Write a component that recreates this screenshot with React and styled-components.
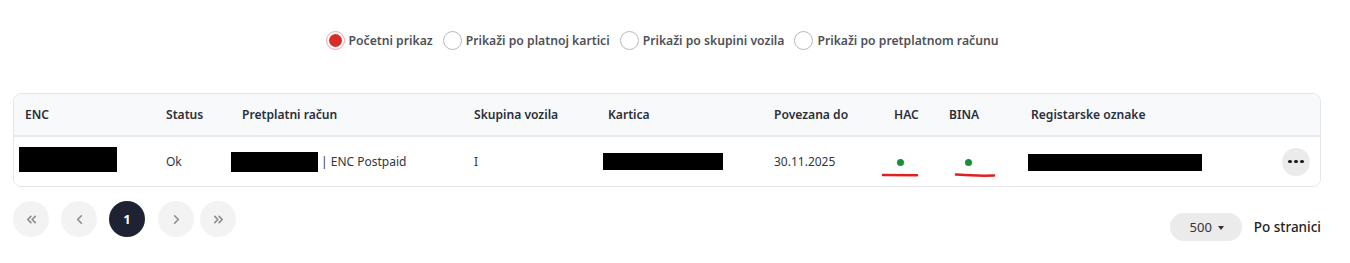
import React, { useState } from "react";
import styled, { createGlobalStyle } from "styled-components";
import { ChevronsLeft, ChevronLeft, ChevronRight, ChevronsRight } from "lucide-react";

const GlobalStyle = createGlobalStyle`
  body {
    margin: 0;
    background: #fff;
    font-family: "Noto Sans", "Open Sans", Arial, sans-serif;
    color: #2b2f3a;
  }
`;

const Page = styled.div`
  width: 1308px;
  padding: 31px 0 0 13px;
`;

const RadioBar = styled.div`
  display: flex;
  justify-content: center;
  align-items: center;
  gap: 10px;
  height: 18px;
  padding-right: 10px;
`;

const RadioItem = styled.label`
  display: flex;
  align-items: center;
  gap: 4px;
  font-size: 12.2px;
  font-weight: 600;
  color: #4f5158;
  cursor: pointer;
  white-space: nowrap;
`;

const RadioCircle = styled.span`
  box-sizing: border-box;
  width: 19px;
  height: 19px;
  border-radius: 50%;
  border: 1.5px solid ${({ checked }) => (checked ? "#f2a9a6" : "#b9b9b9")};
  background: #fff;
  display: flex;
  align-items: center;
  justify-content: center;
  &::after {
    content: "";
    width: 13px;
    height: 13px;
    border-radius: 50%;
    background: ${({ checked }) => (checked ? "#d82c27" : "transparent")};
  }
`;

const TableBox = styled.div`
  margin-top: 44px;
  border: 1px solid #e4e6ea;
  border-radius: 8px;
  overflow: hidden;
`;

const Row = styled.div`
  display: grid;
  grid-template-columns: 141px 76px 232px 134px 166px 120px 55px 82px 1fr 28px;
  align-items: center;
  padding: 0 10px 0 11px;
  height: ${({ head }) => (head ? "41px" : "49px")};
  background: ${({ head }) => (head ? "#f8f9fb" : "#fff")};
  border-bottom: ${({ head }) => (head ? "2px solid #e9eaed" : "none")};
  box-sizing: content-box;
`;

const HeadCell = styled.div`
  font-size: 12.1px;
  font-weight: 600;
  color: #2b2f3a;
  white-space: nowrap;
`;

const Cell = styled.div`
  position: relative;
  font-size: 12px;
  color: #33363d;
  display: flex;
  align-items: center;
  white-space: nowrap;
`;

const Redacted = styled.span`
  display: inline-block;
  background: #000;
  width: ${({ w }) => w}px;
  height: ${({ h }) => h}px;
  margin-left: ${({ shift }) => shift}px;
  margin-top: ${({ top }) => top || 0}px;
`;

const Dot = styled.span`
  display: inline-block;
  width: 7px;
  height: 7px;
  border-radius: 50%;
  background: #17903c;
  margin-left: ${({ shift }) => shift}px;
  margin-top: 2px;
`;

const Scribble = styled.svg`
  position: absolute;
  left: ${({ left }) => left}px;
  top: 16px;
  overflow: visible;
`;

const MoreButton = styled.button`
  width: 28px;
  height: 28px;
  border-radius: 50%;
  border: none;
  background: #ebebeb;
  display: flex;
  align-items: center;
  justify-content: center;
  gap: 2.5px;
  padding: 0;
  cursor: pointer;
  span {
    width: 3.5px;
    height: 3.5px;
    border-radius: 50%;
    background: #1f2128;
  }
`;

const Footer = styled.div`
  display: flex;
  justify-content: space-between;
  align-items: flex-start;
  margin-top: 14px;
`;

const Pager = styled.div`
  display: flex;
  align-items: center;
`;

const PageButton = styled.button`
  width: 36px;
  height: 36px;
  border-radius: 50%;
  border: none;
  padding: 0;
  margin-right: ${({ gap }) => gap}px;
  background: ${({ active }) => (active ? "#1f2232" : "#f3f3f4")};
  color: ${({ active }) => (active ? "#fff" : "#8c8c8c")};
  font-family: inherit;
  font-size: 13px;
  font-weight: 700;
  display: flex;
  align-items: center;
  justify-content: center;
  cursor: pointer;
`;

const PerPage = styled.div`
  display: flex;
  align-items: center;
  gap: 12px;
  margin-top: 12px;
`;

const SizeSelect = styled.button`
  width: 72px;
  height: 28px;
  border-radius: 14px;
  border: none;
  background: #ebebec;
  font-family: inherit;
  font-size: 13px;
  color: #333;
  display: flex;
  align-items: center;
  justify-content: center;
  gap: 6px;
  padding: 0 0 0 2px;
  &::after {
    content: "";
    border-left: 3.5px solid transparent;
    border-right: 3.5px solid transparent;
    border-top: 4px solid #333;
    margin-top: 1px;
  }
`;

const PerPageLabel = styled.span`
  font-size: 13.5px;
  font-weight: 500;
  color: #222;
`;

const options = [
  "Početni prikaz",
  "Prikaži po platnoj kartici",
  "Prikaži po skupini vozila",
  "Prikaži po pretplatnom računu",
];

const headers = [
  "ENC",
  "Status",
  "Pretplatni račun",
  "Skupina vozila",
  "Kartica",
  "Povezana do",
  "HAC",
  "BINA",
  "Registarske oznake",
  "",
];

export default function App() {
  const [view, setView] = useState(0);

  return (
    <>
      <GlobalStyle />
      <Page>
        <RadioBar>
          {options.map((o, i) => (
            <RadioItem key={o} onClick={() => setView(i)}>
              <RadioCircle checked={view === i} />
              {o}
            </RadioItem>
          ))}
        </RadioBar>

        <TableBox>
          <Row head>
            {headers.map((h, i) => (
              <HeadCell key={i}>{h}</HeadCell>
            ))}
          </Row>
          <Row>
            <Cell>
              <Redacted w={98} h={25} shift={-6} top={-4} />
            </Cell>
            <Cell>Ok</Cell>
            <Cell>
              <Redacted w={87} h={20} shift={-11} />
              <span style={{ marginLeft: 3 }}>| ENC Postpaid</span>
            </Cell>
            <Cell>I</Cell>
            <Cell>
              <Redacted w={120} h={17} shift={-5} />
            </Cell>
            <Cell>30.11.2025</Cell>
            <Cell>
              <Dot shift={3} />
              <Scribble left={-12} width="36" height="4">
                <path d="M1 2 L35 2.3" stroke="#e0201f" strokeWidth="2.5" strokeLinecap="round" fill="none" />
              </Scribble>
            </Cell>
            <Cell>
              <Dot shift={16} />
              <Scribble left={6} width="40" height="5">
                <path d="M1 1.5 Q20 3 39 2.5" stroke="#e0201f" strokeWidth="2.5" strokeLinecap="round" fill="none" />
              </Scribble>
            </Cell>
            <Cell>
              <Redacted w={174} h={17} shift={-3} top={2} />
            </Cell>
            <Cell>
              <MoreButton>
                <span />
                <span />
                <span />
              </MoreButton>
            </Cell>
          </Row>
        </TableBox>

        <Footer>
          <Pager>
            <PageButton gap={12}>
              <ChevronsLeft size={15} strokeWidth={2.6} />
            </PageButton>
            <PageButton gap={12}>
              <ChevronLeft size={15} strokeWidth={2.6} />
            </PageButton>
            <PageButton gap={13} active>
              1
            </PageButton>
            <PageButton gap={6}>
              <ChevronRight size={15} strokeWidth={2.6} />
            </PageButton>
            <PageButton gap={0}>
              <ChevronsRight size={15} strokeWidth={2.6} />
            </PageButton>
          </Pager>
          <PerPage>
            <SizeSelect>500</SizeSelect>
            <PerPageLabel>Po stranici</PerPageLabel>
          </PerPage>
        </Footer>
      </Page>
    </>
  );
}
